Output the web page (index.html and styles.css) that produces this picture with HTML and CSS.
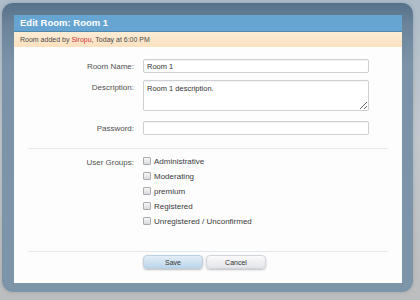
FILE: index.html
```html
<!DOCTYPE html>
<html lang="en">
<head>
  <meta charset="UTF-8" />
  <title>Edit Room: Room 1</title>
  <link rel="stylesheet" href="styles.css">
</head>
<body>
  <div class="overlay-frame">
    <div class="dialog">
      <div class="dialog-title">Edit Room: Room 1</div>
      <div class="dialog-info">Room added by <a class="username" href="#">Siropu</a>, Today at 6:00 PM</div>

      <form class="room-form">
        <div class="ctrl-unit">
          <label for="roomName">Room Name:</label>
          <input type="text" id="roomName" class="text-ctrl" value="Room 1" />
        </div>
        <div class="ctrl-unit">
          <label for="roomDesc" class="label-top">Description:</label>
          <textarea id="roomDesc" class="text-ctrl">Room 1 description.</textarea>
        </div>
        <div class="ctrl-unit">
          <label for="roomPass">Password:</label>
          <input type="password" id="roomPass" class="text-ctrl" />
        </div>

        <div class="separator"></div>

        <div class="ctrl-unit groups">
          <label class="label-top">User Groups:</label>
          <ul class="check-list">
            <li><label><input type="checkbox" /> Administrative</label></li>
            <li><label><input type="checkbox" /> Moderating</label></li>
            <li><label><input type="checkbox" /> premium</label></li>
            <li><label><input type="checkbox" /> Registered</label></li>
            <li><label><input type="checkbox" /> Unregistered / Unconfirmed</label></li>
          </ul>
        </div>

        <div class="separator submit-sep"></div>

        <div class="submit-unit">
          <button type="button" class="button primary">Save</button>
          <button type="button" class="button">Cancel</button>
        </div>
      </form>
    </div>
  </div>
</body>
</html>
```

FILE: styles.css
```css
body {
  margin: 0;
  width: 420px;
  height: 300px;
  overflow: hidden;
  font-family: "Liberation Sans", Arial, sans-serif;
  background: linear-gradient(180deg, #aebdc9 0%, #c2c8cd 45%, #bcbdbe 100%);
}
.overlay-frame {
  margin: 3px 0 0 2px;
  width: 411px;
  height: 289px;
  box-sizing: border-box;
  padding: 12px 11px 9px 12px;
  border-radius: 11px;
  background: linear-gradient(180deg, #56718a 0%, #6b849a 22px, #7a93a8 60px, #7c95a9 100%);
  box-shadow: 0 0 4px rgba(0,0,0,0.15);
}
.dialog {
  height: 100%;
  background: #fdfdfe;
  display: flex;
  flex-direction: column;
}
.dialog-title {
  height: 16px;
  line-height: 16px;
  padding: 0 6px;
  background: #66a5d1;
  border-bottom: 1px solid #5386ab;
  color: #fff;
  font-size: 9.5px;
  font-weight: bold;
}
.dialog-info {
  height: 15px;
  line-height: 15px;
  padding: 0 6px;
  background: linear-gradient(180deg, #fdecd5 0%, #fbe1bf 100%);
  color: #4b4b4b;
  font-size: 7px;
}
.username {
  color: #d0343a;
  text-decoration: none;
}
.room-form {
  padding-top: 12px;
}
.ctrl-unit {
  display: grid;
  grid-template-columns: 120px 226px;
  column-gap: 9px;
  align-items: center;
  margin-bottom: 7px;
}
.ctrl-unit > label {
  text-align: right;
  font-size: 8px;
  color: #505050;
}
.ctrl-unit > .label-top {
  align-self: start;
  padding-top: 3px;
}
.text-ctrl {
  box-sizing: border-box;
  width: 226px;
  height: 14px;
  margin: 0;
  padding: 0 3px;
  border: 1px solid #cdd0d4;
  border-radius: 2px;
  background: #fff;
  box-shadow: inset 0 1px 1px rgba(0,0,0,0.05);
  font-family: "Liberation Sans", Arial, sans-serif;
  font-size: 7.5px;
  color: #333;
}
textarea.text-ctrl {
  height: 31px;
  padding: 3px;
  resize: vertical;
}
.ctrl-unit:nth-child(2) {
  margin-bottom: 10px;
}
.separator {
  margin: 13px 14px 0;
  border-top: 1px solid #e2e8ee;
}
.groups {
  margin-top: 5px;
  margin-bottom: 0;
}
.groups > .label-top {
  padding-top: 4px;
}
.check-list {
  list-style: none;
  margin: 0;
  padding: 0;
}
.check-list li {
  height: 15px;
  line-height: 15px;
  font-size: 8px;
  color: #3a3a3a;
}
.check-list label {
  display: flex;
  align-items: center;
  gap: 3px;
}
.check-list input {
  appearance: none;
  -webkit-appearance: none;
  width: 8px;
  height: 8px;
  margin: 0;
  border: 1px solid #a9acb0;
  border-radius: 1px;
  background: linear-gradient(180deg, #f7f7f7 0%, #d9dadc 100%);
  position: relative;
  top: -1px;
}
.submit-sep {
  margin-top: 22px;
}
.submit-unit {
  display: flex;
  gap: 3px;
  padding: 3px 0 0 129px;
}
.button {
  width: 60px;
  height: 14px;
  padding: 0;
  border: 1px solid #d0d6dc;
  border-radius: 4px;
  background: linear-gradient(180deg, #fbfbfd 0%, #e3e3ea 100%);
  box-shadow: 0 1px 2px rgba(0,0,0,0.25);
  font-family: "Liberation Sans", Arial, sans-serif;
  font-size: 7px;
  color: #333;
}
.button.primary {
  border-color: #bcd0e0;
  background: linear-gradient(180deg, #e4eef7 0%, #bad4e9 100%);
}
```
